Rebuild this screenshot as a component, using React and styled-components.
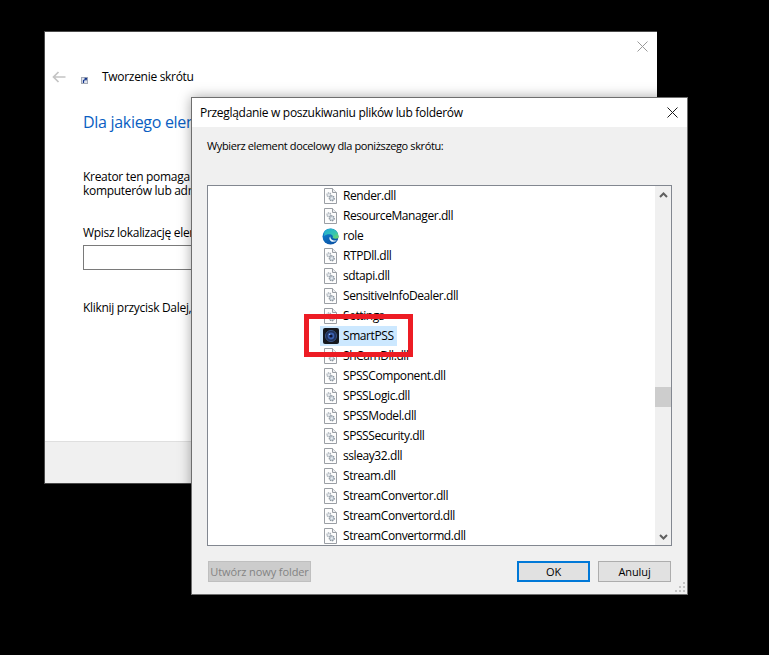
import React from 'react'
import styled, { createGlobalStyle } from 'styled-components'

const GlobalStyle = createGlobalStyle`
  html, body {
    margin: 0;
    padding: 0;
    background: #000;
  }
  #root {
    width: 769px;
    height: 655px;
  }
`

const Desktop = styled.div`
  position: relative;
  width: 769px;
  height: 655px;
  overflow: hidden;
  background: #000;
  font-family: "Open Sans", "Noto Sans", sans-serif;
  font-size: 12px;
  letter-spacing: -0.3px;
  color: #000;
`

const WizardWindow = styled.div`
  position: absolute;
  left: 44px;
  top: 31px;
  width: 613px;
  height: 453px;
  box-sizing: border-box;
  display: flex;
  flex-direction: column;
  background: #fff;
  border: 1px solid #4a4a4a;
  border-right: none;
`

const WizardTop = styled.div`
  height: 14px;
  padding: 9px 9px 0 0;
  display: flex;
  justify-content: flex-end;
`

const WizardNav = styled.div`
  display: flex;
  align-items: center;
  height: 20px;
  margin-top: 12px;
  padding-left: 7px;
`

const NavIcon = styled.span`
  display: flex;
  margin: 7px 0 0 15px;
`

const WizardTitle = styled.span`
  margin-left: 14px;
  line-height: 20px;
`

const WizardBody = styled.div`
  flex: 1;
  padding: 24px 0 0 38px;
  white-space: nowrap;
  overflow: hidden;
`

const Heading = styled.div`
  font-size: 16px;
  line-height: 22px;
  letter-spacing: -0.3px;
  color: #0a5ec2;
`

const Paragraph = styled.div`
  margin-top: ${props => props.$gap}px;
  line-height: 14px;
`

const LocationInput = styled.div`
  width: 500px;
  height: 25px;
  margin-top: 5px;
  box-sizing: border-box;
  border: 1px solid #7a7a7a;
  background: #fff;
`

const WizardFooter = styled.div`
  height: 41px;
  background: #f0f0f0;
  border-top: 1px solid #dfdfdf;
`

const BrowseDialog = styled.div`
  position: absolute;
  left: 191px;
  top: 97px;
  width: 497px;
  height: 498px;
  box-sizing: border-box;
  display: flex;
  flex-direction: column;
  background: #f0f0f0;
  border: 1px solid #6e6e6e;
  box-shadow: 0 0 12px rgba(0, 0, 0, 0.35);
`

const TitleBar = styled.div`
  height: 29px;
  flex: none;
  display: flex;
  align-items: center;
  justify-content: space-between;
  padding: 0 9px 0 8px;
  background: #fff;
`

const DialogBody = styled.div`
  flex: 1;
  display: flex;
  flex-direction: column;
  padding: 0 15px;
  position: relative;
`

const Prompt = styled.div`
  margin-top: 12px;
  font-size: 11px;
  letter-spacing: -0.38px;
  line-height: 14px;
`

const TreeBox = styled.div`
  margin-top: 32px;
  height: 361px;
  width: 465px;
  box-sizing: border-box;
  display: flex;
  background: #fff;
  border: 1px solid #828790;
`

const TreeList = styled.div`
  flex: 1;
  overflow: hidden;
  padding-left: 112px;
`

const TreeRow = styled.div`
  height: 20px;
  display: flex;
  align-items: center;
`

const RowIcon = styled.span`
  width: 23px;
  height: 20px;
  flex: none;
  box-sizing: border-box;
  padding-right: 2px;
  display: flex;
  align-items: center;
  justify-content: center;
  svg { display: block; }
`

const RowLabel = styled.span`
  line-height: 20px;
  letter-spacing: -0.42px;
  white-space: nowrap;
`

const SelectedRow = styled.div`
  height: 20px;
  display: inline-flex;
  align-items: center;
  padding-right: 3px;
  background: #cce8ff;
`

const Scrollbar = styled.div`
  width: 16px;
  flex: none;
  display: flex;
  flex-direction: column;
  background: #f0f0f0;
`

const ScrollArrow = styled.div`
  height: 17px;
  flex: none;
  display: flex;
  align-items: center;
  justify-content: center;
`

const ScrollTrack = styled.div`
  flex: 1;
  padding-top: 184px;
`

const ScrollThumb = styled.div`
  height: 20px;
  background: #cdcdcd;
`

const ButtonRow = styled.div`
  display: flex;
  align-items: center;
  margin-top: 15px;
  padding-left: 1px;
`

const DialogButton = styled.div`
  width: ${props => props.$width}px;
  height: 21px;
  box-sizing: border-box;
  display: flex;
  align-items: center;
  justify-content: center;
  margin-left: ${props => props.$gap || 0}px;
  font-size: 11px;
  letter-spacing: -0.1px;
  white-space: nowrap;
  background: ${props => props.$disabled ? '#cccccc' : '#e1e1e1'};
  border: ${props => props.$primary ? '2px solid #0078d7' : props.$disabled ? '1px solid #bfbfbf' : '1px solid #adadad'};
  color: ${props => props.$disabled ? '#838383' : '#000'};
`

const ResizeGrip = styled.svg`
  position: absolute;
  right: 1px;
  bottom: 1px;
`

const RedFrame = styled.div`
  position: absolute;
  left: 304px;
  top: 314px;
  width: 109px;
  height: 43px;
  box-sizing: border-box;
  border: 5px solid #ed1c24;
`

const CloseIcon = ({ color }) => (
  <svg width="11" height="11" viewBox="0 0 11 11">
    <path d="M0.5 0.5L10.5 10.5M10.5 0.5L0.5 10.5" stroke={color} strokeWidth="1" fill="none" />
  </svg>
)

const BackArrow = () => (
  <svg width="14" height="12" viewBox="0 0 14 12">
    <path d="M13.5 6H2M6.5 1L1.5 6L6.5 11" stroke="#c4c4c4" strokeWidth="1.7" fill="none" />
  </svg>
)

const ShortcutIcon = () => (
  <svg width="7" height="7" viewBox="0 0 7 7">
    <rect x="0.5" y="0.5" width="6" height="6" fill="#dfe3ec" stroke="#a3a9b6" />
    <path d="M2.5 6V3.5L5 2M3.6 1.4L5.4 1.6L5 3.4" stroke="#12358c" strokeWidth="1.2" fill="none" />
  </svg>
)

const DllIcon = () => (
  <svg width="13" height="16" viewBox="0 0 13 16">
    <path d="M0.5 0.5H8.5L12.5 4.5V15.5H0.5Z" fill="#fdfdfd" stroke="#9a9ea4" />
    <path d="M8.5 0.5V4.5H12.5" fill="#eceef0" stroke="#9a9ea4" />
    <circle cx="4.8" cy="6.8" r="1.9" fill="#e4e8ec" stroke="#a3abb3" strokeWidth="1.3" strokeDasharray="1.2 0.6" />
    <circle cx="7.8" cy="10.3" r="2.4" fill="#cfd8e0" stroke="#8d97a1" strokeWidth="1.4" strokeDasharray="1.3 0.6" />
    <circle cx="7.8" cy="10.3" r="0.8" fill="#f4f6f8" />
  </svg>
)

const EdgeIcon = () => (
  <svg width="17" height="17" viewBox="0 0 17 17">
    <defs>
      <linearGradient id="edgeBlue" x1="0" y1="0" x2="0.5" y2="1">
        <stop offset="0" stopColor="#0f86d6" />
        <stop offset="1" stopColor="#0b56a8" />
      </linearGradient>
      <linearGradient id="edgeGreen" x1="0" y1="0" x2="1" y2="1">
        <stop offset="0" stopColor="#1fa8d8" />
        <stop offset="0.6" stopColor="#37c6b0" />
        <stop offset="1" stopColor="#7ed957" />
      </linearGradient>
    </defs>
    <circle cx="8.5" cy="8.5" r="8" fill="url(#edgeBlue)" />
    <path d="M2.2 3.8C4.4 0.4 10 -0.4 13.6 2.4C16 4.4 16.8 7.2 16.4 10C14 11.2 10.8 10.8 10.6 9.6C11.2 8.6 10.8 7.2 9.2 6.6C6.8 5.8 4 6.4 2.2 8.2Z" fill="url(#edgeGreen)" />
    <path d="M8.2 8.6C6.9 9.8 7.1 12.4 9.3 13.4C11 14.2 13.2 13.8 14.8 12.6C13 12.6 10.6 12.4 9.3 11.2C8.6 10.5 8.3 9.6 8.2 8.6Z" fill="#f2fbff" />
  </svg>
)

const SmartPssIcon = () => (
  <svg width="16" height="16" viewBox="0 0 16 16">
    <rect width="16" height="16" rx="2" fill="#15181f" />
    <circle cx="8" cy="8" r="5.6" fill="#1f2f58" stroke="#34507f" />
    <circle cx="8" cy="8" r="3.4" fill="#3a5fae" />
    <circle cx="8" cy="8" r="1.6" fill="#0d1230" />
    <circle cx="6.6" cy="6.4" r="0.7" fill="#9fd0ff" />
  </svg>
)

const Chevron = ({ up }) => (
  <svg width="9" height="6" viewBox="0 0 9 6">
    <path d={up ? 'M1 5L4.5 1.5L8 5' : 'M1 1L4.5 4.5L8 1'} stroke="#606060" strokeWidth="2" fill="none" />
  </svg>
)

const rows = [
  { label: 'Render.dll' },
  { label: 'ResourceManager.dll' },
  { label: 'role', icon: 'edge' },
  { label: 'RTPDll.dll' },
  { label: 'sdtapi.dll' },
  { label: 'SensitiveInfoDealer.dll' },
  { label: 'Settings' },
  { label: 'SmartPSS', icon: 'smartpss', selected: true },
  { label: 'ShCamDll.dll' },
  { label: 'SPSSComponent.dll' },
  { label: 'SPSSLogic.dll' },
  { label: 'SPSSModel.dll' },
  { label: 'SPSSSecurity.dll' },
  { label: 'ssleay32.dll' },
  { label: 'Stream.dll' },
  { label: 'StreamConvertor.dll' },
  { label: 'StreamConvertord.dll' },
  { label: 'StreamConvertormd.dll' },
]

const iconFor = (icon) => {
  if (icon === 'edge') return <EdgeIcon />
  if (icon === 'smartpss') return <SmartPssIcon />
  return <DllIcon />
}

const App = () => {
  const list = rows.map((row) => {
    const content = (
      <>
        <RowIcon>{iconFor(row.icon)}</RowIcon>
        <RowLabel>{row.label}</RowLabel>
      </>
    )
    return (
      <TreeRow key={row.label}>
        {row.selected ? <SelectedRow>{content}</SelectedRow> : content}
      </TreeRow>
    )
  })

  return (
    <Desktop>
      <GlobalStyle />
      <WizardWindow>
        <WizardTop><CloseIcon color="#9a9a9a" /></WizardTop>
        <WizardNav>
          <BackArrow />
          <NavIcon><ShortcutIcon /></NavIcon>
          <WizardTitle>Tworzenie skrótu</WizardTitle>
        </WizardNav>
        <WizardBody>
          <Heading>Dla jakiego elementu chcesz utworzyć skrót?</Heading>
          <Paragraph $gap={37}>Kreator ten pomaga tworzyć skróty do lokalnych lub sieciowych programów, plików, folderów,</Paragraph>
          <Paragraph $gap={0}>komputerów lub adresów internetowych.</Paragraph>
          <Paragraph $gap={28}>Wpisz lokalizację elementu:</Paragraph>
          <LocationInput />
          <Paragraph $gap={31}>Kliknij przycisk Dalej, aby kontynuować.</Paragraph>
        </WizardBody>
        <WizardFooter />
      </WizardWindow>

      <BrowseDialog>
        <TitleBar>
          <span>Przeglądanie w poszukiwaniu plików lub folderów</span>
          <CloseIcon color="#1a1a1a" />
        </TitleBar>
        <DialogBody>
          <Prompt>Wybierz element docelowy dla poniższego skrótu:</Prompt>
          <TreeBox>
            <TreeList>{list}</TreeList>
            <Scrollbar>
              <ScrollArrow><Chevron up /></ScrollArrow>
              <ScrollTrack><ScrollThumb /></ScrollTrack>
              <ScrollArrow><Chevron /></ScrollArrow>
            </Scrollbar>
          </TreeBox>
          <ButtonRow>
            <DialogButton $width={103} $disabled>Utwórz nowy folder</DialogButton>
            <DialogButton $width={73} $gap={206} $primary>OK</DialogButton>
            <DialogButton $width={73} $gap={8}>Anuluj</DialogButton>
          </ButtonRow>
          <ResizeGrip width="11" height="11" viewBox="0 0 11 11">
            <path d="M8 0h2v2H8zM4 4h2v2H4zM8 4h2v2H8zM0 8h2v2H0zM4 8h2v2H4zM8 8h2v2H8z" fill="#c4c4c4" />
          </ResizeGrip>
        </DialogBody>
      </BrowseDialog>
      <RedFrame />
    </Desktop>
  )
}

export default App
